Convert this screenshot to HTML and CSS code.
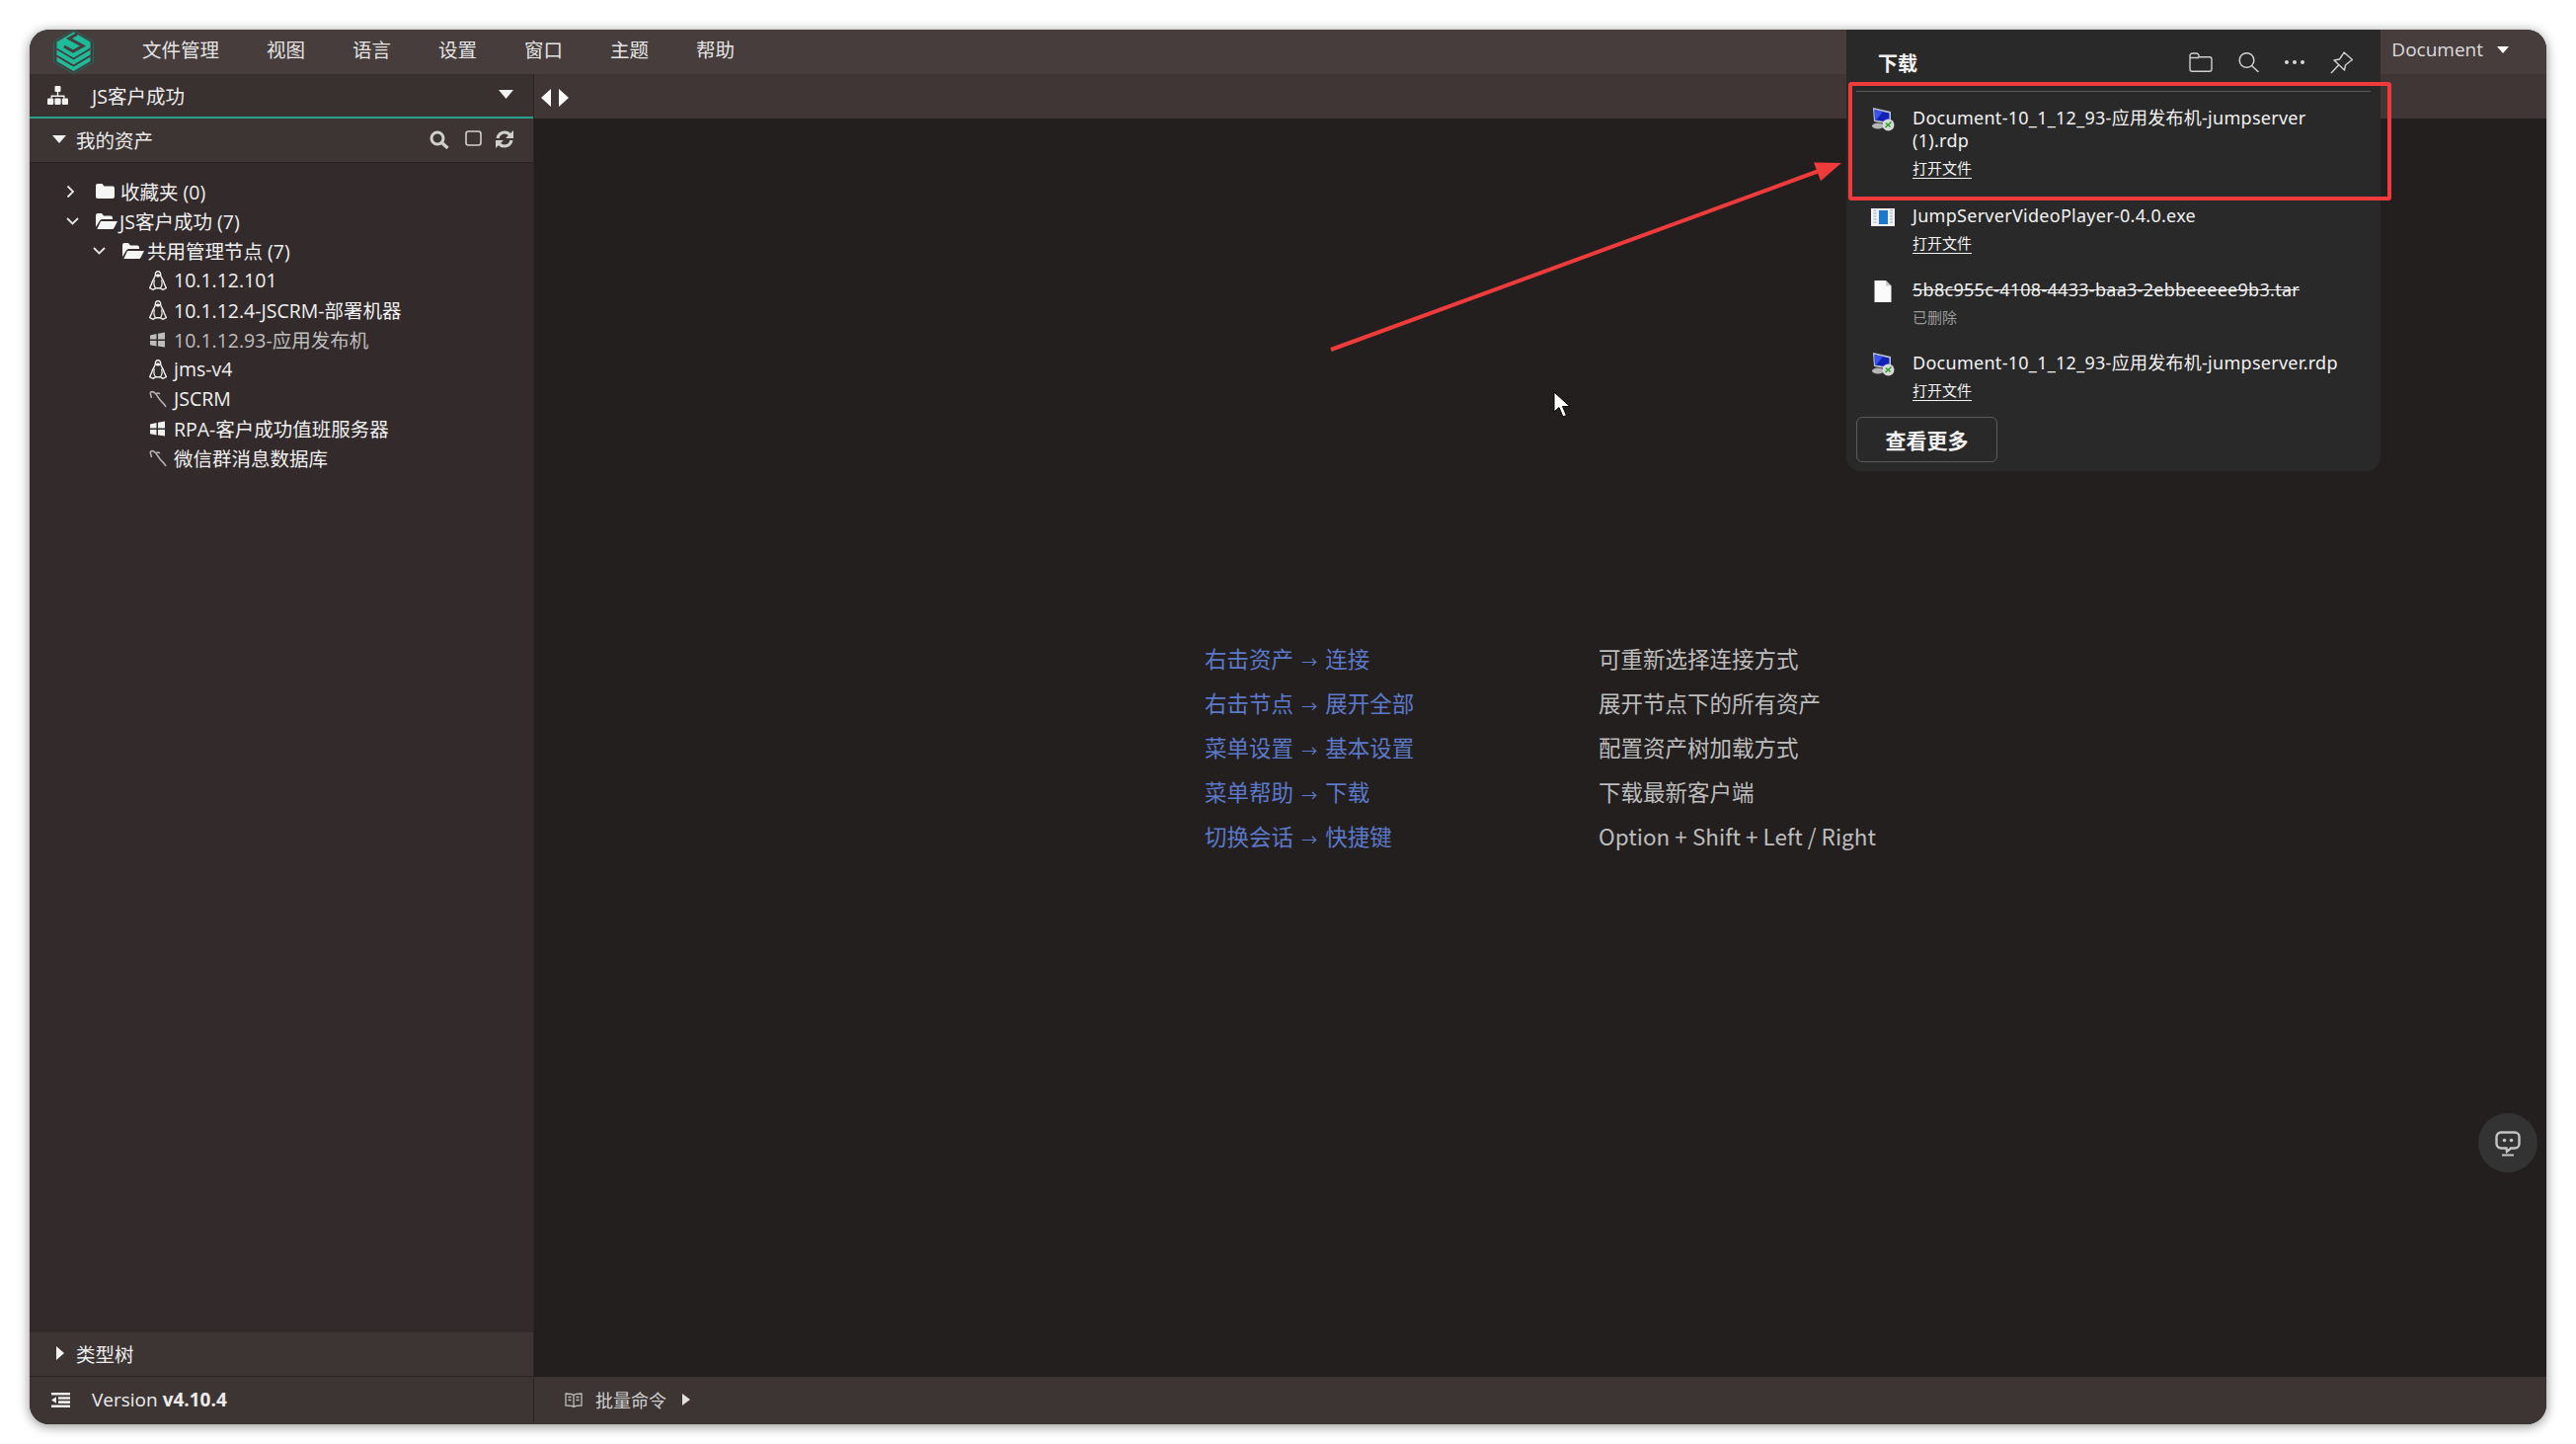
FILE: index.html
```html
<!DOCTYPE html>
<html lang="zh-CN">
<head>
<meta charset="utf-8">
<title>JumpServer</title>
<link rel="stylesheet" href="styles.css">
</head>
<body>
<div class="app">
  <header class="menubar">
    <div class="logo">
      <svg viewBox="0 0 41 45" width="41" height="45">
        <polygon points="20.5,0.5 40.5,12 40.5,33 20.5,44.5 0.5,33 0.5,12" fill="none" stroke="#1f6a5c" stroke-width="1"/>
        <polygon points="20.5,2.5 37.5,12.5 37.5,20 20.5,30 3.5,20 3.5,12.5" fill="#1dbb9a"/>
        <path d="M11 17 L20 22 L30 16.5 L16 9 L24 4.5" fill="none" stroke="#473d3c" stroke-width="3"/>
        <polygon points="3.5,19 20.5,29 37.5,19 37.5,26 20.5,36 3.5,26" fill="#1dbb9a"/>
        <polygon points="3.5,27.5 20.5,37.5 37.5,27.5 37.5,32 20.5,42 3.5,32" fill="#1dbb9a"/>
        <path d="M3.5 19.5 L20.5 29.5 L37.5 19.5 M3.5 26.5 L20.5 36.5 L37.5 26.5" fill="none" stroke="#473d3c" stroke-width="1.6"/>
      </svg>
    </div>
    <nav class="menu">
      <span class="menu-item">文件管理</span>
      <span class="menu-item">视图</span>
      <span class="menu-item">语言</span>
      <span class="menu-item">设置</span>
      <span class="menu-item">窗口</span>
      <span class="menu-item">主题</span>
      <span class="menu-item">帮助</span>
    </nav>
    <div class="user">
      <span>Document</span>
      <svg class="caret-user" viewBox="0 0 12 7" width="12" height="7"><path d="M0 0H12L6 7Z" fill="#fff"/></svg>
    </div>
  </header>

  <div class="workspace">
    <aside class="sidebar">
      <div class="org">
        <svg class="org-icon" viewBox="0 0 21 19" width="21" height="19" fill="#f2f2f2">
          <rect x="7.5" y="0" width="6" height="6" rx="1"/>
          <path d="M9.8 6h1.4v3.5h6.3v3h-1.4v-1.6H4.9v1.6H3.5v-3h6.3z"/>
          <rect x="0" y="12.5" width="6.2" height="6.5" rx="1.2"/>
          <rect x="7.4" y="12.5" width="6.2" height="6.5" rx="1.2"/>
          <rect x="14.8" y="12.5" width="6.2" height="6.5" rx="1.2"/>
        </svg>
        <span class="org-name">JS客户成功</span>
        <svg class="org-caret" viewBox="0 0 15 9" width="15" height="9"><path d="M0 0H15L7.5 9Z" fill="#f2f2f2"/></svg>
      </div>

      <div class="tree-head">
        <svg class="head-caret" viewBox="0 0 14 8" width="14" height="8"><path d="M0 0H14L7 8Z" fill="#f2f2f2"/></svg>
        <span class="head-title">我的资产</span>
        <svg class="tool tool-search" viewBox="0 0 20 19" width="20" height="19" fill="none" stroke="#d0d0d0">
          <circle cx="8" cy="8" r="6" stroke-width="3"/>
          <path d="M12.5 12.5L18.5 18" stroke-width="3.2"/>
        </svg>
        <svg class="tool tool-square" viewBox="0 0 17 16" width="17" height="16" fill="none" stroke="#d0d0d0">
          <rect x="1" y="1" width="15" height="14" rx="2.5" stroke-width="1.6"/>
        </svg>
        <svg class="tool tool-refresh" viewBox="0 0 18 18" width="18" height="18" fill="none" stroke="#d0d0d0" stroke-width="3.2">
          <path d="M2 8C2.6 4.4 5.5 2 9 2c2.3 0 4.3 1 5.6 2.8"/>
          <path d="M16 10c-.6 3.6-3.5 6-7 6-2.3 0-4.3-1-5.6-2.8"/>
          <path d="M18 0v8h-8z" fill="#d0d0d0" stroke="none"/>
          <path d="M0 18v-8h8z" fill="#d0d0d0" stroke="none"/>
        </svg>
      </div>

      <ul class="tree">
        <li class="row lvl-0">
          <span class="chev"><svg viewBox="0 0 9 14" width="9" height="14" fill="none" stroke="#e6e6e6" stroke-width="1.8"><path d="M1.5 1.5L7 7l-5.5 5.5"/></svg></span>
          <svg class="folder" viewBox="0 0 19 15" width="19" height="15"><path d="M0 2a2 2 0 0 1 2-2h4.5l2 2.5H17a2 2 0 0 1 2 2V13a2 2 0 0 1-2 2H2a2 2 0 0 1-2-2z" fill="#f5f5f5"/></svg>
          <span class="label">收藏夹 (0)</span>
        </li>
        <li class="row lvl-0">
          <span class="chev"><svg viewBox="0 0 13 8" width="13" height="8" fill="none" stroke="#e6e6e6" stroke-width="1.8"><path d="M1 1l5.5 5.5L12 1"/></svg></span>
          <svg class="folder-open" viewBox="0 0 22 16" width="22" height="16" fill="#f5f5f5"><path d="M0 14V2a2 2 0 0 1 2-2h4l2 2.5h7a2 2 0 0 1 2 2V6H6.5a3 3 0 0 0-2.7 1.7z"/><path d="M5 8h17l-3.6 7a2 2 0 0 1-1.8 1H1.3z"/></svg>
          <span class="label">JS客户成功 (7)</span>
        </li>
        <li class="row lvl-1">
          <span class="chev"><svg viewBox="0 0 13 8" width="13" height="8" fill="none" stroke="#e6e6e6" stroke-width="1.8"><path d="M1 1l5.5 5.5L12 1"/></svg></span>
          <svg class="folder-open" viewBox="0 0 22 16" width="22" height="16" fill="#f5f5f5"><path d="M0 14V2a2 2 0 0 1 2-2h4l2 2.5h7a2 2 0 0 1 2 2V6H6.5a3 3 0 0 0-2.7 1.7z"/><path d="M5 8h17l-3.6 7a2 2 0 0 1-1.8 1H1.3z"/></svg>
          <span class="label label-close">共用管理节点 (7)</span>
        </li>
        <li class="row leaf">
          <svg class="ico" viewBox="0 0 18 20" width="18" height="20"><use href="#tux"/></svg>
          <span class="label">10.1.12.101</span>
        </li>
        <li class="row leaf">
          <svg class="ico" viewBox="0 0 18 20" width="18" height="20"><use href="#tux"/></svg>
          <span class="label">10.1.12.4-JSCRM-部署机器</span>
        </li>
        <li class="row leaf off">
          <svg class="ico" viewBox="0 0 18 20" width="18" height="20"><use href="#win"/></svg>
          <span class="label">10.1.12.93-应用发布机</span>
        </li>
        <li class="row leaf">
          <svg class="ico" viewBox="0 0 18 20" width="18" height="20"><use href="#tux"/></svg>
          <span class="label">jms-v4</span>
        </li>
        <li class="row leaf">
          <svg class="ico dim" viewBox="0 0 18 20" width="18" height="20"><use href="#db"/></svg>
          <span class="label">JSCRM</span>
        </li>
        <li class="row leaf">
          <svg class="ico" viewBox="0 0 18 20" width="18" height="20"><use href="#win"/></svg>
          <span class="label">RPA-客户成功值班服务器</span>
        </li>
        <li class="row leaf">
          <svg class="ico dim" viewBox="0 0 18 20" width="18" height="20"><use href="#db"/></svg>
          <span class="label">微信群消息数据库</span>
        </li>
      </ul>

      <div class="type-head">
        <svg class="type-caret" viewBox="0 0 8 14" width="8" height="14"><path d="M0 0L8 7L0 14Z" fill="#f2f2f2"/></svg>
        <span>类型树</span>
      </div>
    </aside>

    <main class="main">
      <div class="tabbar">
        <svg viewBox="0 0 28 18" width="28" height="18"><path d="M10 0V18L0 9Z M18 0L28 9L18 18Z" fill="#fff"/></svg>
      </div>
      <div class="tips">
        <div class="tips-grid">
          <span class="tip-key">右击资产 <span class="tip-arrow">→</span> 连接</span><span class="tip-val">可重新选择连接方式</span>
          <span class="tip-key">右击节点 <span class="tip-arrow">→</span> 展开全部</span><span class="tip-val">展开节点下的所有资产</span>
          <span class="tip-key">菜单设置 <span class="tip-arrow">→</span> 基本设置</span><span class="tip-val">配置资产树加载方式</span>
          <span class="tip-key">菜单帮助 <span class="tip-arrow">→</span> 下载</span><span class="tip-val">下载最新客户端</span>
          <span class="tip-key">切换会话 <span class="tip-arrow">→</span> 快捷键</span><span class="tip-val">Option + Shift + Left / Right</span>
        </div>
      </div>
    </main>
  </div>

  <footer class="statusbar">
    <div class="version">
      <svg viewBox="0 0 19 15" width="19" height="15" fill="#ececec"><path d="M0 0h19v2.6H0zM0 12.4h19V15H0zM7 4.2h12v2.6H7zM7 8.3h12v2.6H7zM0 7.5L5 4.2v6.6z"/></svg>
      <span class="version-text">Version <b>v4.10.4</b></span>
    </div>
    <div class="batch">
      <svg viewBox="0 0 18 15" width="18" height="15" fill="none" stroke="#bdbdbd" stroke-width="1.3"><path d="M9 2.5C7.5 1.2 5 1 1 1v12c4 0 6.5.2 8 1.5 1.5-1.3 4-1.5 8-1.5V1c-4 0-6.5.2-8 1.5zM9 2.5v12M3.5 4.5h3M3.5 7.5h3M11.500 4.500h3M11.500 7.500h3"/></svg>
      <span class="batch-text">批量命令</span>
      <svg class="batch-caret" viewBox="0 0 8 12" width="8" height="12"><path d="M0 0L8 6L0 12Z" fill="#e0e0e0"/></svg>
    </div>
  </footer>

  <section class="downloads">
    <div class="dl-head">
      <span class="dl-title">下载</span>
      <div class="dl-tools">
        <svg viewBox="0 0 24 20" width="24" height="20" fill="none" stroke="#d0d0d0" stroke-width="1.4"><path d="M1 4.500V17a2.300 2.300 0 0 0 2.300 2.300h17.400A2.300 2.300 0 0 0 23 17V7a2.300 2.300 0 0 0-2.300-2.300H10V3.500A2.500 2.500 0 0 0 7.500 1H3.500A2.500 2.500 0 0 0 1 3.500zM1 5.500h9"/></svg>
        <svg viewBox="0 0 21 20" width="21" height="20" fill="none" stroke="#d0d0d0" stroke-width="1.5"><circle cx="8.500" cy="8" r="7.300"/><path d="M13.500 13.500L20.500 20"/></svg>
        <svg class="dl-more" viewBox="0 0 20 4" width="20" height="4" fill="#d8d8d8"><circle cx="2" cy="2" r="2"/><circle cx="10" cy="2" r="2"/><circle cx="18" cy="2" r="2"/></svg>
        <svg viewBox="0 0 23 23" width="23" height="23" fill="none" stroke="#d0d0d0" stroke-width="1.4" stroke-linejoin="round"><path d="M14 1L22.500 8.500L20.300 10L15.500 14L14.500 19L4 9L9.500 8L12.500 3.500zM8.500 14L1 22"/></svg>
      </div>
    </div>
    <div class="dl-rule"></div>
    <div class="dl-list">
      <article class="dl-item">
        <svg class="dl-ico" viewBox="0 0 24 24" width="24" height="24"><use href="#rdp"/></svg>
        <div class="dl-body">
          <div class="dl-name">Document-10_1_12_93-应用发布机-jumpserver (1).rdp</div>
          <span class="dl-link">打开文件</span>
        </div>
      </article>
      <article class="dl-item">
        <svg class="dl-ico" viewBox="0 0 24 24" width="24" height="24">
          <rect x="0" y="3" width="24" height="18" fill="#f1f3f6"/>
          <rect x="8" y="5" width="9" height="14" fill="#1a78d0"/>
          <path d="M2.500 5h3M2.500 8h3M2.500 11h3M2.500 14h3M2.500 17h3M19 5h3M19 8h3M19 11h3M19 14h3M19 17h3" stroke="#9aa7b5" stroke-width="1.200"/>
        </svg>
        <div class="dl-body">
          <div class="dl-name">JumpServerVideoPlayer-0.4.0.exe</div>
          <span class="dl-link">打开文件</span>
        </div>
      </article>
      <article class="dl-item">
        <svg class="dl-ico" viewBox="0 0 24 24" width="24" height="24"><path d="M3.500 1H15L20.500 6.500V23H3.500Z" fill="#fafafa"/><path d="M15 1V6.500H20.500Z" fill="#c9c9c9"/></svg>
        <div class="dl-body">
          <div class="dl-name dl-gone">5b8c955c-4108-4433-baa3-2ebbeeeee9b3.tar</div>
          <span class="dl-note">已删除</span>
        </div>
      </article>
      <article class="dl-item">
        <svg class="dl-ico" viewBox="0 0 24 24" width="24" height="24"><use href="#rdp"/></svg>
        <div class="dl-body">
          <div class="dl-name">Document-10_1_12_93-应用发布机-jumpserver.rdp</div>
          <span class="dl-link">打开文件</span>
        </div>
      </article>
    </div>
    <button class="dl-more-btn">查看更多</button>
  </section>

  <div class="callout"></div>
  <svg class="annot" viewBox="30 30 2549 1412">
    <path d="M1348 354L1845 172" stroke="#ef3b3b" stroke-width="4" fill="none"/>
    <polygon points="1865,165 1837,164.500 1844,183.300" fill="#ef3b3b"/>
  </svg>
  <svg class="cursor" viewBox="0 0 19 28" width="19" height="28">
    <path d="M1 1V21L6 16.500L10 26L13.500 24.500L9.500 15.500H17Z" fill="#fff" stroke="#000" stroke-width="1"/>
  </svg>
  <button class="chat">
    <svg viewBox="0 0 26 26" width="26" height="26" fill="none" stroke="#c4c4c4" stroke-width="2.400"><path d="M6 1.500H20A4.500 4.500 0 0 1 24.500 6V13A4.500 4.500 0 0 1 20 17.500H16L12 21L11.500 17.500H6A4.500 4.500 0 0 1 1.500 13V6A4.500 4.500 0 0 1 6 1.500Z"/><path d="M7 24.500H19" stroke-width="2"/><circle cx="9.500" cy="9.500" r="1.800" fill="#c4c4c4" stroke="none"/><circle cx="16.500" cy="9.500" r="1.800" fill="#c4c4c4" stroke="none"/></svg>
  </button>
</div>

<svg class="defs" width="0" height="0">
  <defs>
    <symbol id="tux" viewBox="0 0 18 20">
      <path d="M9 .7C7 .7 6.300 2.300 6.300 4.500c0 2-2.800 5-3.600 8.500L.7 17.500 4 19.300l2.500-1.500h5l2.500 1.500 3.300-1.800L15.300 13c-.8-3.500-3.600-6.500-3.600-8.500C11.700 2.300 11 .7 9 .7Z" fill="#312a2a" stroke="#f2f2f2" stroke-width="1.400"/>
      <path d="M6.500 5C7.500 7 10.500 7 11.500 5 11 3 7 3 6.500 5Z" fill="#f2f2f2"/>
      <path d="M5.500 9.500C4.500 12 4.700 15 6.500 17.500M12.500 9.500C13.500 12 13.300 15 11.500 17.500" fill="none" stroke="#f2f2f2" stroke-width="1.200"/>
    </symbol>
    <symbol id="win" viewBox="0 0 18 20">
      <path d="M1 5.500L7.500 4V9.500H1ZM9 3.700L16 2.500V9.500H9ZM1 11H7.500V16.500L1 15.300ZM9 11H16V17.500L9 16.500Z" fill="currentColor"/>
    </symbol>
    <symbol id="db" viewBox="0 0 18 20">
      <path d="M1 3.500C3 2 5.500 3 7 5c2 2.500 3 5 5.500 7.500 1.500 1.500 3.500 3 4.500 5.500M2.500 9C2 7 1.500 5 1 3.500M7 5c1.500-1.500 3-1 4 0" fill="none" stroke="currentColor" stroke-width="1.500"/>
    </symbol>
    <symbol id="rdp" viewBox="0 0 24 24">
      <path d="M2 0L20 4V17L3 14Z" fill="#b9c2d2"/>
      <path d="M3.500 2L18.500 5.500V15L4 12.500Z" fill="#1222b8"/>
      <path d="M3.500 2L12 4 6 11.500 4 12.500Z" fill="#3a55e6"/>
      <ellipse cx="7" cy="18.500" rx="6" ry="3" fill="#b5b5b5"/>
      <circle cx="17.500" cy="17.500" r="6" fill="#d9d9d9"/>
      <path d="M14.500 20L20.500 14.500M15 15.500L19.500 19.500" stroke="#2da32d" stroke-width="1.600"/>
    </symbol>
  </defs>
</svg>
</body>
</html>
```

FILE: styles.css
```css
* { box-sizing: border-box; }
html, body { margin: 0; padding: 0; background: #fff; }
body { padding: 30px 30px 20px; height: 1462px; overflow: hidden; }

.app {
  position: relative;
  width: 2549px;
  height: 1412px;
  display: flex;
  flex-direction: column;
  border-radius: 20px;
  background: #231f1f;
  color: #ececec;
  box-shadow: 0 2px 12px rgba(0, 0, 0, .45);
  font-family: "Open Sans", "Noto Sans CJK SC", sans-serif;
  font-size: 19.5px;
  overflow: hidden;
}

/* top menu */
.menubar { flex: 0 0 45px; display: flex; align-items: center; background: #473d3c; }
.logo { width: 90px; height: 45px; padding-left: 24px; display: flex; }
.menu { display: flex; }
.menu-item { padding: 0 24px 3px; line-height: 42px; color: #e4e4e4; }
.user { margin-left: auto; padding: 0 38px 5px 0; display: flex; align-items: center; font-size: 19px; color: #dcdcdc; }
.user span { margin-left: 1px; }
.caret-user { margin-left: 14px; }

/* workspace */
.workspace { flex: 1; display: flex; min-height: 0; }
.sidebar { flex: 0 0 511px; display: flex; flex-direction: column; background: #322a2b; border-right: 1px solid #2a2424; }
.org { flex: 0 0 45px; display: flex; align-items: center; padding: 0 20px 0 18px; background: #393030; border-bottom: 2px solid #28a08a; }
.org-name { margin-left: 24px; flex: 1; color: #ececec; }
.org-caret { margin-bottom: 3px; }

.tree-head { flex: 0 0 45px; display: flex; align-items: center; padding: 0 20px 2px 23px; background: #3d3534; border-bottom: 1px solid #2a2424; }
.head-title { margin-left: 10px; flex: 1; }
.tool { flex: none; }
.tool-search { margin-right: 16px; }
.tool-square { margin-right: 14px; margin-bottom: 3px; }

.tree { flex: 1; list-style: none; margin: 0; padding: 13.5px 0 0; }
.row { height: 30px; display: flex; align-items: center; color: #f0f0f0; white-space: nowrap; }
.lvl-0 { padding-left: 34px; }
.lvl-1 { padding-left: 61px; }
.leaf { padding-left: 121px; }
.off { color: #bdbdbd; }
.chev { flex: 0 0 33px; display: flex; align-items: center; padding-left: 3px; }
.folder { margin-right: 6px; flex: none; }
.folder-open { margin-right: 2px; flex: none; }
.label-close { margin-left: 1px; }
.ico { margin-right: 7px; flex: none; color: inherit; }
.ico.dim { color: #b5b5b5; }

.type-head { flex: 0 0 45px; display: flex; align-items: center; gap: 12px; padding: 0 0 2px 27px; background: #3d3534; border-bottom: 1px solid #2a2424; }

/* main */
.main { flex: 1; display: flex; flex-direction: column; min-width: 0; }
.tabbar { flex: 0 0 45px; display: flex; align-items: center; padding: 3px 0 0 7px; background: #3f3635; }
.tips { flex: 1; display: flex; align-items: center; justify-content: center; padding-bottom: 3px; }
.tips-grid { display: grid; grid-template-columns: 399px auto; grid-auto-rows: 45px; align-items: center; font-family: "Noto Sans CJK SC", "Noto Sans", sans-serif; font-size: 22.5px; }
.tip-key { color: #5c79c9; }
.tip-arrow { display: inline-block; margin: 0 3px; font-size: 16px; }
.tip-val { color: #bdbdbd; }

/* status */
.statusbar { flex: 0 0 48px; display: flex; padding-bottom: 2px; background: #3d3534; }
.version { flex: 0 0 511px; display: flex; align-items: center; gap: 22px; padding-left: 22px; border-right: 1px solid #2a2424; }
.version-text { font-size: 19px; }
.batch { display: flex; align-items: center; padding-left: 31px; }
.batch-text { margin-left: 13px; font-size: 18px; color: #d0d0d0; }
.batch-caret { margin-left: 16px; }

/* downloads flyout */
.downloads {
  position: absolute;
  left: 1840px;
  top: 0;
  width: 541px;
  height: 447px;
  padding: 0 10px;
  background: #292929;
  border-radius: 0 0 14px 14px;
  font-family: "Noto Sans", "Noto Sans CJK SC", sans-serif;
  color: #f2f2f2;
}
.dl-head { height: 62px; display: flex; align-items: center; padding: 4px 18px 0 22px; }
.dl-title { flex: 1; font-size: 20px; font-weight: 700; }
.dl-tools { display: flex; align-items: center; gap: 26px; }
.dl-rule { height: 1px; background: #5a5a5a; }
.dl-list { display: flex; flex-direction: column; gap: 24.5px; padding: 15px 0 15px; }
.dl-item { display: flex; padding-left: 15px; }
.dl-ico { flex: none; margin: 1px 18px 0 0; }
.dl-body { flex: 1; padding-right: 20px; }
.dl-name { font-size: 18px; line-height: 23px; letter-spacing: .28px; }
.dl-gone { text-decoration: line-through; }
.dl-link { display: inline-block; margin-top: 7px; font-size: 15px; line-height: 19px; border-bottom: 1px solid #f2f2f2; }
.dl-note { display: block; margin-top: 6px; font-size: 15px; line-height: 20px; color: #9a9a9a; }
.dl-more-btn {
  display: block;
  width: 143px;
  height: 46px;
  padding: 0;
  background: transparent;
  border: 1px solid #5a5a5a;
  border-radius: 6px;
  font: 700 21px "Noto Sans CJK SC", sans-serif;
  color: #f2f2f2;
}

/* annotations */
.callout { position: absolute; left: 1842px; top: 53px; width: 550px; height: 120px; border: 4px solid #ef3b3b; border-radius: 3px; }
.annot { position: absolute; left: 0; top: 0; width: 2549px; height: 1412px; pointer-events: none; }
.cursor { position: absolute; left: 1543px; top: 366px; }
.chat { position: absolute; left: 2480px; top: 1097px; width: 60px; height: 60px; display: flex; align-items: center; justify-content: center; padding: 2px 0 0; border: 0; border-radius: 50%; background: #333; }
.defs { position: absolute; }
```
